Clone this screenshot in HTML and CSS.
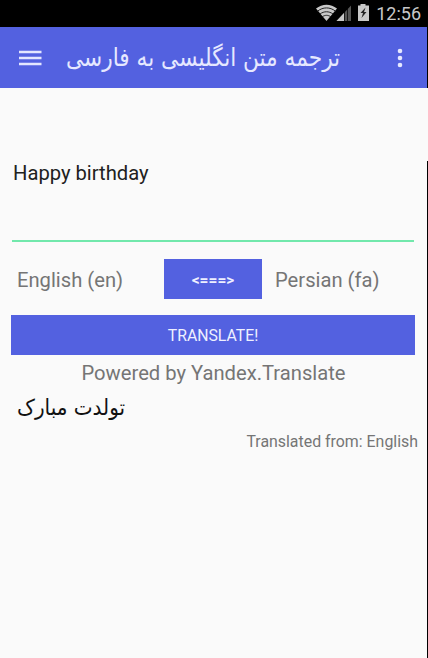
FILE: index.html
```
<!DOCTYPE html>
<html lang="en">
<head>
  <meta charset="utf-8">
  <title>Translate</title>
  <link rel="stylesheet" href="styles.css">
</head>
<body>
  <div class="screen">
    <div class="status-bar">
      <svg class="status-icons" width="55" height="20" viewBox="0 0 55 20">
        <path d="M0 5.500C6.200.4 14.800.4 21 5.500L10.500 18z" fill="#c8c8c8"/>
        <path d="M1.500 8.200C7 3.800 14 3.800 19.500 8.200M4 11C8 8 13 8 17 11M6 13.900C9 11.800 12 11.800 15 13.900" fill="none" stroke="#222" stroke-width="1"/>
        <path d="M20.500 18L35 2.500V18z" fill="#555"/>
        <path d="M20.500 18L28 10V18z" fill="#c8c8c8"/>
        <path d="M28.500 9V18M31.500 6V18" stroke="#000" stroke-width=".7"/>
        <path d="M42 2.500h2.500V1h5v1.500H53V18H42z" fill="#c8c8c8"/>
        <path d="M49.500 4.500l-5 5.500h2.500l-1.500 5 5-6h-2.500z" fill="#222"/>
      </svg>
      <span class="clock">12:56</span>
    </div>
    <div class="toolbar">
      <svg class="menu-icon" width="24" height="16" viewBox="0 0 24 16">
        <path d="M0 2h22.500M0 8h22.500M0 14h22.500" stroke="#e3e6ff" stroke-width="2.400"/>
      </svg>
      <h1 class="title" lang="fa" dir="rtl">ترجمه متن انگلیسی به فارسی</h1>
      <svg class="more-icon" width="6" height="20" viewBox="0 0 6 20">
        <circle cx="3" cy="3" r="2.300"/>
        <circle cx="3" cy="10" r="2.300"/>
        <circle cx="3" cy="17" r="2.300"/>
      </svg>
    </div>
    <div class="content">
      <div class="source">Happy birthday</div>
      <div class="languages">
        <span class="from">English (en)</span>
        <div class="button swap">&lt;===&gt;</div>
        <span class="to">Persian (fa)</span>
      </div>
      <div class="button translate">TRANSLATE!</div>
      <p class="powered">Powered by Yandex.Translate</p>
      <p class="result" lang="fa" dir="rtl">تولدت مبارک</p>
      <p class="detected">Translated from: English</p>
    </div>
  </div>
</body>
</html>
```
FILE: styles.css
```
body { font-family: Roboto, "DejaVu Sans", sans-serif; margin: 0; background-color: #fafafa; }
p, h1 { margin: 0; font-weight: normal; }
.screen { width: 428px; height: 658px; overflow: hidden; }
.status-bar { display: flex; justify-content: flex-end; height: 27px; background-color: #000; padding-right: 7px; }
.status-icons { margin: 3px 5px 0 0; }
.clock { color: #c8c8c8; font-size: 18px; line-height: 27px; }
.toolbar { display: flex; align-items: center; box-sizing: border-box; height: 61px; padding: 0 24px 0 19px; background-color: #5361e0; border-right: 1px solid #000; }
.menu-icon { margin-right: 23px; }
.title { color: #e6e8ff; font-family: "DejaVu Sans", sans-serif; font-size: 22px; line-height: 59px; white-space: nowrap; transform: scale(.985, 1.150); transform-origin: left center; }
.more-icon { margin-left: auto; fill: #e6e8ff; }
/* the edge line starts below the gap under the toolbar */
.content { box-sizing: border-box; height: 497px; margin-top: 73px; padding: 0 12px 0 11px; border-right: 1px solid #000; color: #757575; }
.source { box-sizing: border-box; height: 81px; margin: 0 1px; padding-left: 1px; border-bottom: 2px solid #72e8ac; color: #212121; font-size: 20.200px; line-height: 24px; }
.languages { display: flex; align-items: center; height: 40px; margin-top: 17px; font-size: 20.200px; line-height: 24px; }
.from { width: 147px; padding: 2px 0 0 6px; }
.to { padding: 2px 0 0 13px; }
.button { height: 40px; background-color: #5361e0; color: #eef0ff; line-height: 40px; text-align: center; }
.swap { width: 98px; font-size: 15.500px; font-weight: bold; line-height: 42px; }
.translate { margin-top: 16px; font-size: 15.800px; line-height: 41px; }
.powered { margin-top: 6px; padding-left: 1px; font-size: 20.200px; line-height: 24px; text-align: center; }
.result { margin: 6px 0 0 6px; color: #111; font-family: "DejaVu Sans", sans-serif; font-size: 20px; line-height: 32px; text-align: left; transform: scaleY(1.100); }
.detected { margin: 9px -3px 0 0; font-size: 15.900px; line-height: 20px; text-align: right; }
```
